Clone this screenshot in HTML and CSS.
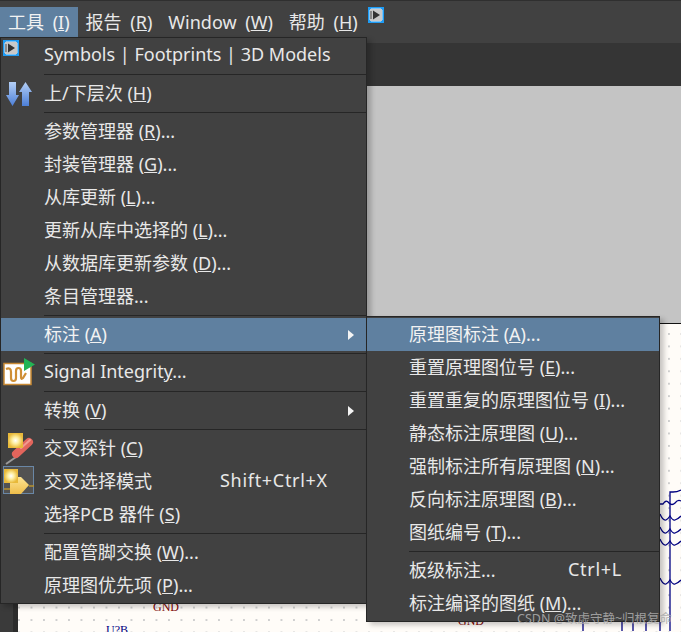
FILE: index.html
```html
<!DOCTYPE html>
<html lang="zh">
<head>
<meta charset="utf-8">
<title>工具菜单</title>
<link rel="stylesheet" href="styles.css">
</head>
<body>
<div class="app">
  <header class="menubar">
    <div class="top active">工具 (<u>I</u>)</div>
    <div class="top">报告 (<u>R</u>)</div>
    <div class="top">Window (<u>W</u>)</div>
    <div class="top">帮助 (<u>H</u>)</div>
    <svg class="mini" viewBox="0 0 16 16"><rect width="16" height="16" fill="#1e9cf5"/><rect x="3" y="1" width="10" height="14" fill="#7fc4f5"/><rect x="1" y="3" width="14" height="10" fill="#7fc4f5"/><rect x="2" y="2" width="12" height="12" fill="#c9c9c9"/><rect x="2" y="4" width="2" height="8" fill="#8a8a8a"/><path d="M5 3.5 L12 8 L5 12.5Z" fill="#333"/></svg>
  </header>
  <div class="toolbar"></div>
  <main class="workspace">
    <div class="strip"></div>
    <div class="sheet">
      <div class="greyzone"></div>
      <div class="paper">
        <svg class="wires" viewBox="0 0 663 309">
          <g fill="none" stroke="#000080" stroke-width="1.3">
            <path d="M652 309 V170 H655 Q659 170 663 168"/>
            <path d="M642 182 H645 Q648 177 651 181 Q654 184 657 181 Q660 177 663 179"/>
            <path d="M642 192 Q645 199 648 198 Q650 197 652 194 Q655 199 657 198 Q660 197 663 194"/>
            <path d="M642 205 Q645 212 648 211 Q650 210 652 207 Q655 212 657 211 Q660 210 663 207"/>
            <path d="M642 217 Q645 224 648 223 Q650 222 652 219 Q655 224 657 223 Q660 222 663 219"/>
            <path d="M642 256 Q645 263 648 262 Q650 261 652 258 Q655 263 657 262 Q660 261 663 258"/>
            <path d="M565 300 V309 M604 300 V309 M615 300 V309 M628 300 V309 M642 300 V309"/>
          </g>
        </svg>
        <span class="net gnd-a">GND</span>
        <span class="net gnd-b">GND</span>
        <span class="part">U?B</span>
      </div>
    </div>
  </main>

  <nav class="menu">
    <div class="item"><span class="slot"><svg class="ico" viewBox="0 0 43 33"><rect x="2" y="1" width="16" height="16" fill="#1e9cf5"/><rect x="5" y="2" width="10" height="14" fill="#7fc4f5"/><rect x="3" y="4" width="14" height="10" fill="#7fc4f5"/><rect x="4" y="3" width="12" height="12" fill="#c9c9c9"/><rect x="4" y="5" width="2" height="8" fill="#8a8a8a"/><path d="M7 4.5 L14 9 L7 13.5Z" fill="#333"/></svg></span><span class="label">Symbols | Footprints | 3D Models</span></div>
    <div class="sep"></div>
    <div class="item"><span class="slot"><svg class="ico" viewBox="0 0 43 33"><defs><linearGradient id="arr" x1="0" y1="0" x2="0" y2="1"><stop offset="0" stop-color="#b4cff5"/><stop offset="1" stop-color="#4c7fd8"/></linearGradient></defs><path d="M8 5 H15 V18 H18 L11.5 29 L5 18 H8Z" fill="url(#arr)"/><path d="M24.5 5 L31 15 H28 V29 H21 V15 H18Z" fill="url(#arr)"/></svg></span><span class="label">上/下层次 (<u>H</u>)</span></div>
    <div class="sep"></div>
    <div class="item"><span class="slot"></span><span class="label">参数管理器 (<u>R</u>)...</span></div>
    <div class="item"><span class="slot"></span><span class="label">封装管理器 (<u>G</u>)...</span></div>
    <div class="item"><span class="slot"></span><span class="label">从库更新 (<u>L</u>)...</span></div>
    <div class="item"><span class="slot"></span><span class="label">更新从库中选择的 (<u>L</u>)...</span></div>
    <div class="item"><span class="slot"></span><span class="label">从数据库更新参数 (<u>D</u>)...</span></div>
    <div class="item"><span class="slot"></span><span class="label">条目管理器...</span></div>
    <div class="sep"></div>
    <div class="item on"><span class="slot"></span><span class="label">标注 (<u>A</u>)</span><span class="arrow"></span></div>
    <div class="sep"></div>
    <div class="item"><span class="slot"><svg class="ico" viewBox="0 0 43 33"><rect x="3" y="7.5" width="27" height="21" fill="#fff" stroke="#c98a35" stroke-width="1.5"/><path d="M5 13 Q10 11 10 16 V22 Q10 25 12.5 25 Q15 25 15 22 V15 Q15 12 17.5 12 Q20 12 20 15 V21 Q20 24 22 22 L25 17" fill="none" stroke="#cf8f35" stroke-width="2.2"/><path d="M23 2 L34 8.5 L23 15Z" fill="#22b455"/></svg></span><span class="label">Signal Integrit<u>y</u>...</span></div>
    <div class="sep"></div>
    <div class="item"><span class="slot"></span><span class="label">转换 (<u>V</u>)</span><span class="arrow"></span></div>
    <div class="sep"></div>
    <div class="item"><span class="slot"><svg class="ico" viewBox="0 0 43 33"><defs><radialGradient id="glowa"><stop offset="0" stop-color="#fff"/><stop offset=".45" stop-color="#fdeea0"/><stop offset="1" stop-color="#e8b93a"/></radialGradient></defs><path d="M15 25 L5 32" stroke="#9a9a9a" stroke-width="2"/><path d="M28 10 L15 22" stroke="#e2655c" stroke-width="8" stroke-linecap="round"/><path d="M29 8 L20 16" stroke="#f09a90" stroke-width="2" stroke-linecap="round"/><rect x="7" y="1" width="15" height="15" fill="url(#glowa)"/></svg></span><span class="label">交叉探针 (<u>C</u>)</span></div>
    <div class="item"><span class="slot"><svg class="ico" viewBox="0 0 43 33"><defs><radialGradient id="glowb"><stop offset="0" stop-color="#fff"/><stop offset=".45" stop-color="#fdeea0"/><stop offset="1" stop-color="#e8b93a"/></radialGradient><linearGradient id="gate" x1="0" y1="0" x2="0" y2="1"><stop offset="0" stop-color="#fde493"/><stop offset="1" stop-color="#eebd4a"/></linearGradient></defs><rect x="2.5" y="1.5" width="30" height="27" fill="#525252" stroke="#6a87a6"/><path d="M3 24 H10 M28 21 H33" stroke="#b8932f" stroke-width="1.6"/><path d="M9 12 H20 L28 20 L20 29 H9Z" fill="url(#gate)"/><rect x="3" y="4" width="14" height="14" fill="url(#glowb)"/></svg></span><span class="label wide">交叉选择模式</span><span class="key">Shift+Ctrl+X</span></div>
    <div class="item"><span class="slot"></span><span class="label">选择PCB 器件 (<u>S</u>)</span></div>
    <div class="sep"></div>
    <div class="item"><span class="slot"></span><span class="label">配置管脚交换 (<u>W</u>)...</span></div>
    <div class="item"><span class="slot"></span><span class="label">原理图优先项 (<u>P</u>)...</span></div>
  </nav>

  <nav class="menu sub">
    <div class="item on"><span class="label">原理图标注 (<u>A</u>)...</span></div>
    <div class="item"><span class="label">重置原理图位号 (<u>E</u>)...</span></div>
    <div class="item"><span class="label">重置重复的原理图位号 (<u>I</u>)...</span></div>
    <div class="item"><span class="label">静态标注原理图 (<u>U</u>)...</span></div>
    <div class="item"><span class="label">强制标注所有原理图 (<u>N</u>)...</span></div>
    <div class="item"><span class="label">反向标注原理图 (<u>B</u>)...</span></div>
    <div class="item"><span class="label">图纸编号 (<u>T</u>)...</span></div>
    <div class="sep"></div>
    <div class="item"><span class="label wide-sub">板级标注...</span><span class="key">Ctrl+L</span></div>
    <div class="item"><span class="label">标注编译的图纸 (<u>M</u>)...</span></div>
  </nav>

  <div class="watermark">CSDN @致虚守静~归根复命</div>
</div>
</body>
</html>
```

FILE: styles.css
```css
* { box-sizing: border-box; }
html, body { margin: 0; padding: 0; }
body { background: #3a3a3a; font-family: "Noto Sans", "Noto Sans CJK SC", sans-serif; font-size: 18px; color: #e8e8e8; }
.app { position: relative; width: 681px; height: 632px; overflow: hidden; display: flex; flex-direction: column; }

.menubar { height: 43px; flex: none; background: #414141; border-top: 1px solid #2f2f2f; display: flex; align-items: flex-start; padding-top: 6px; }
.top { height: 30px; line-height: 30px; padding: 0 8px; white-space: nowrap; word-spacing: 4px; }
.top.active { background: #5f80a0; color: #f2f2f2; }
.mini { width: 16px; height: 16px; margin-left: 2px; flex: none; }

.toolbar { height: 43px; flex: none; background: #353535; }

.workspace { flex: 1; display: flex; min-height: 0; }
.strip { width: 18px; flex: none; background: linear-gradient(to right, #3a3a3a 13px, #2c2c2c 13px); }
.sheet { flex: 1; display: flex; flex-direction: column; min-width: 0; }
.greyzone { height: 238px; flex: none; background: #c4c4c4; border-bottom: 1px solid #111; }
.paper { position: relative; flex: 1; background-color: #fffcf8; background-image: radial-gradient(circle at 1px 1px, #cfcfcf 0.8px, transparent 1.1px); background-size: 12.5px 12.45px; background-position: 0 9px; }
.wires { position: absolute; left: 0; top: -2px; width: 663px; height: 309px; }
.net, .part { position: absolute; font-family: "Liberation Serif", serif; font-size: 12px; line-height: 14px; white-space: nowrap; }
.net { color: #800000; }
.gnd-a { left: 135px; top: 276px; }
.gnd-b { left: 440px; top: 290px; }
.part { left: 88px; top: 299px; color: #000080; }

.menu { position: absolute; left: 0; top: 37px; width: 367px; background: #414141; border: 1px solid #262626; padding: 1px 0; box-shadow: 4px 3px 5px rgba(0, 0, 0, .22); }
.item { height: 33px; display: flex; align-items: center; white-space: nowrap; position: relative; }
.item.on { background: #5f80a0; color: #f2f2f2; }
.slot { width: 43px; height: 33px; flex: none; }
.ico { display: block; width: 43px; height: 33px; overflow: visible; }
.label { flex: none; margin-top: -3px; }
.wide { width: 176px; }
.key { flex: none; margin-top: -3px; letter-spacing: .7px; }
.arrow { width: 0; height: 0; margin-left: auto; margin-right: 12px; border-left: 6px solid #f4f4f4; border-top: 5.5px solid transparent; border-bottom: 5.5px solid transparent; }
.sep { height: 1px; margin: 2px 0 2px 43px; background: #262626; }

.sub { left: 366px; top: 316px; width: 294px; padding-top: 1px; height: 306px; }
.sub .item { padding-left: 42px; }
.sub .sep { margin-left: 42px; }
.wide-sub { width: 159px; }

.watermark { position: absolute; left: 517px; top: 611px; font-size: 12.5px; line-height: 16px; color: rgba(170, 170, 170, .9); white-space: nowrap; }
```
